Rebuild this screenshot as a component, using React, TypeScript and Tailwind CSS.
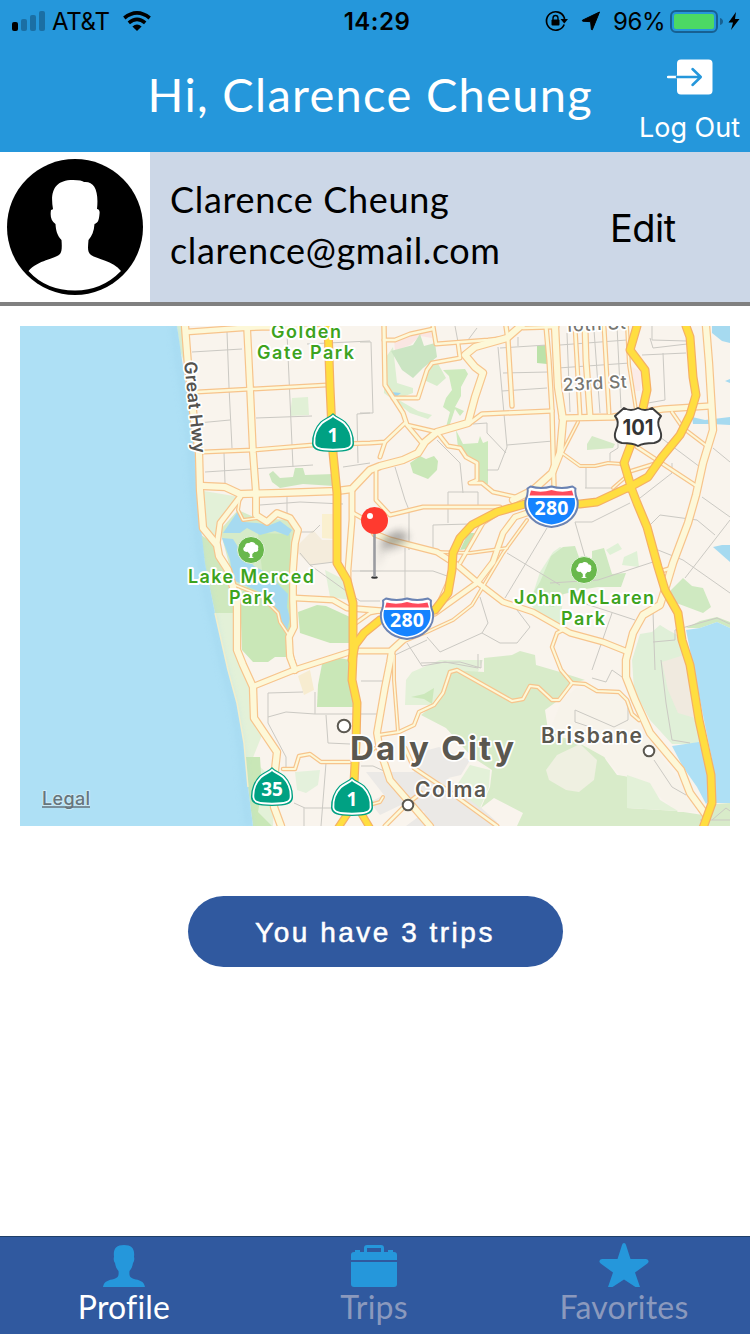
import React from "react";

type Road = { d: string; w: number };

const sans = "font-['Inter','Liberation_Sans',sans-serif]";
const avenir = "font-['Lato','Open_Sans',sans-serif]";

const areas: { fill: string; p: string }[] = [
  // coast
  { fill: "#dcefcf", p: "177,326 186,326 186,345 184,362 180,350" },
  { fill: "#e3f1d8", p: "198,490 240,497 218,527 216,540 203,528" },
  { fill: "#cfe8be", p: "201,535 216,545 233,575 237,613 215,613 205,565" },
  { fill: "#e3f1d8", p: "215,613 237,613 238,650 253,687 254,718 262,735 252,760 275,780 273,826 253,826 248,787 244,743 237,703 228,670" },
  { fill: "#c9e7b7", p: "245,757 260,757 262,790 258,812 272,826 253,826 248,787" },
  // Sunset and Stern Grove
  { fill: "#e1f0d6", p: "292,398 308,397 309,415 290,416" },
  { fill: "#cbe6bd", p: "269,474 273,471 280,478 293,477 295,468 303,468 305,475 334,474 334,486 303,484 280,488 272,482" },
  // Lake Merced
  { fill: "#d6ebc8", p: "220,530 238,510 256,518 290,520 296,533 292,600 240,600 232,575" },
  { fill: "#c9e7b7", p: "258,533 290,534 291,610 289,657 275,657 268,662 253,662 242,650 240,595 262,570" },
  { fill: "#a6daf0", p: "223,533 238,511 245,522 257,523 270,525 280,521 292,530 288,536 275,531 260,535 247,528 240,533" },
  { fill: "#a6daf0", p: "222,538 233,539 240,550 254,566 267,573 288,594 287,607 290,618 287,630 281,620 278,610 260,592 233,580 230,560" },
  { fill: "#f4ecdc", p: "298,545 313,530 322,540 333,540 334,562 310,565 298,553" },
  { fill: "#faf0cf", p: "322,514 334,514 334,539 322,538" },
  { fill: "#c9e7b7", p: "298,612 317,605 326,606 350,617 350,643 330,643 300,633" },
  { fill: "#e3f1d8", p: "325,570 345,580 350,600 330,597" },
  { fill: "#c9e7b7", p: "322,664 334,657 350,660 354,707 317,707 318,685" },
  { fill: "#f7ecd0", p: "298,676 310,670 314,690 304,695" },
  // Twin Peaks and Glen Canyon
  { fill: "#fae6e2", p: "394,340 410,333 431,328 432,338 420,336 410,345 395,351" },
  { fill: "#dcefd1", p: "384,360 393,347 397,383 413,388 413,393 397,399 418,411 432,415 428,419 410,413 400,405 384,393" },
  { fill: "#cbe5c3", p: "391,351 413,345 420,334 424,346 435,343 437,357 423,368 413,378 402,370" },
  { fill: "#d8edcc", p: "428,366 436,360 446,378 437,386 424,380" },
  { fill: "#cdeabd", p: "443,370 465,369 468,374 461,387 461,396 455,407 464,411 460,416 455,409 449,427 446,427 450,412 443,407 446,398 452,390 449,376" },
  { fill: "#cdeabd", p: "456,430 463,444 478,443 480,436 483,443 488,441 488,484 478,484 478,463 458,448" },
  { fill: "#c9e7b7", p: "410,463 420,456 426,459 434,456 438,461 437,470 428,479 413,473" },
  { fill: "#9ed6ef", p: "391,392 401,393 396,397" },
  { fill: "#bce2a9", p: "537,346 546,345 547,364 537,363" },
  { fill: "#d5eac7", p: "587,444 592,436 615,444 613,448 587,450" },
  { fill: "#fbebe7", p: "632,367 642,372 640,391 634,391" },
  { fill: "#c2e5b4", p: "460,550 468,533 475,533 466,549" },
  // McLaren Park
  { fill: "#e0f1d7", p: "540,572 553,552 560,547 568,550 560,627 536,612 530,603" },
  { fill: "#cfe9c1", p: "551,556 563,547 575,546 580,560 592,560 592,551 604,548 612,574 626,573 621,587 598,587 580,590 560,595 554,607 527,603 540,582" },
  { fill: "#dff1d6", p: "606,550 618,543 622,549 610,555" },
  { fill: "#dff1d6", p: "624,557 637,551 639,567 622,565" },
  { fill: "#cfe9c1", p: "671,590 683,578 692,586 703,588 711,607 703,613 687,607 671,601" },
  // bayshore
  { fill: "#e0f0d8", p: "640,634 652,632 660,625 668,630 681,637 699,720 700,744 672,744 650,720 634,690 632,660" },
  { fill: "#f0eadf", p: "662,662 684,655 695,718 678,713 668,690" },
  { fill: "#cfe9c1", p: "686,628 700,621 717,617 730,622 730,628 717,622 700,628" },
  // San Bruno Mountain
  { fill: "#e3f1d8", p: "406,680 412,672 440,660 470,660 483,660 470,690 445,705 425,705 405,705" },
  { fill: "#d8ebc9", p: "448,670 484,672 484,658 512,655 520,651 535,655 536,665 560,672 585,680 572,683 556,702 545,710 548,730 560,737 598,745 606,760 617,775 627,776 627,808 677,811 703,815 699,826 517,826 523,813 494,798 481,808 490,787 492,770 472,757 446,728 421,715 436,703 443,693" },
  { fill: "#cce8bb", p: "411,697 424,694 434,688 432,704 424,699" },
  { fill: "#eff0e1", p: "546,770 557,755 580,744 597,760 594,780 579,792 566,790 549,780" },
  { fill: "#f7f3ea", p: "562,700 577,688 625,695 638,722 658,752 686,790 697,812 678,812 640,780 620,775 606,758 570,738 550,730" },
  { fill: "#e3f1d8", p: "627,775 650,783 660,800 678,811 627,808" },
  { fill: "#d8ebc9", p: "706,816 716,804 730,803 730,826 704,826" },
  // Daly City and Colma
  { fill: "#e4f1dc", p: "295,772 320,770 318,785 306,793 297,790" },
  { fill: "#ebe9e6", p: "366,772 414,772 421,752 439,747 470,760 461,775 448,778 497,822 495,826 406,826 425,812 405,803 380,815 370,802 384,795" },
  { fill: "#e3f1d8", p: "463,776 470,765 490,770 489,787 480,808 455,788" },
  // water
  { fill: "#aee0f5", p: "686,630 700,628 717,622 730,628 730,803 716,803 712,760 702,710" },
  { fill: "#aee0f5", p: "672,746 699,742 712,780 712,798 706,804 697,787 683,767" },
  { fill: "#a6daf0", p: "712,326 730,326 730,343 722,341 712,333" },
  { fill: "#a6daf0", p: "692,417 705,420 730,417 730,425 712,424 693,424" },
  { fill: "#a6daf0", p: "713,547 722,545 730,545 730,562" },
  { fill: "#a6daf0", p: "725,381 730,379 730,383" },
];

const lanes: string[] = [
  "M227 332L229 387L232 448", "M287 333L290 400L293 467", "M192 352L242 349", "M307 344L370 341", "M198 423L230 420",
  "M256 418L312 416", "M205 472L313 465", "M224 453L225 483", "M370 413L357 414L358 463", "M343 467L370 463",
  "M360 342H371L373 413H360", "M455 326L458 342", "M477 328L468 340", "M498 347L507 447L498 470H487", "M507 445L553 441",
  "M503 373L548 372", "M502 391L547 388", "M500 348L547 345", "M518 337V346", "M473 424L487 423V433L506 453",
  "M437 440L460 463L463 493", "M448 523V492H478V507", "M433 552V525L470 524", "M395 467L405 500L409 510V550",
  "M405 548V610", "M360 571H433L450 577", "M360 601H380", "M547 528L505 598", "M507 553L560 585",
  "M480 597L488 623L482 633L500 643H517L530 627L517 610", "M482 633L440 652L427 637", "M395 655L427 640",
  "M407 643L422 666L445 662L478 668V654", "M660 437L700 467", "M713 448L730 462", "M585 488H618", "M586 467V488",
  "M618 428V448L610 453V463", "M650 338L653 348L687 344", "M642 355L686 353", "M663 353L665 400L648 403", "M652 326V340L687 341",
  "M567 333L570 412", "M594 330L600 413", "M617 326L621 408", "M560 345L627 340", "M558 368L630 363", "M640 498L672 473V463",
  "M650 525L660 515L697 520L715 535", "M702 497L730 517", "M730 520L685 578", "M658 550L683 560L730 593",
  "M575 522L585 557", "M575 522H592L630 503", "M598 580L653 562", "M550 583L598 580", "M583 603L635 620", "M612 613L592 670",
  "M653 612L655 670", "M653 642L675 640V630L717 618L730 624", "M260 505L300 502L343 504", "M287 497V514", "M300 532H313L320 525", "M300 553L310 565L334 562",
  "M310 565L360 601", "M352 571H375", "M303 692L268 693V723L286 757V768", "M268 717L286 712L315 714H377", "M315 692V714",
  "M326 715L328 743L350 744", "M326 763L321 826", "M294 803L305 808H334", "M304 808V826", "M361 681H385",
  "M575 710L614 727L628 720V702", "M661 660L666 703L672 740L690 743", "M654 760L672 787L686 795", "M421 663L460 662L481 668V660",
  "M592 678L606 682L612 670L622 677", "M712 820L726 808L730 811", "M361 766H373L384 771", "M575 710V722L590 727", "M700 820H730",
];

const roads: Road[] = [
  { d: "M187 332L242 328L270 327L330 330", w: 6 },
  { d: "M197 392L327 385", w: 4 },
  { d: "M203 452L253 450L313 445L370 443L385 442L405 423", w: 4 },
  { d: "M352 489L352 520L350 545L348 570L348 583", w: 6 },
  { d: "M384 326L385 385L403 413L407 425L422 443", w: 4.5 },
  { d: "M384 340H395L410 334L433 329", w: 4 },
  { d: "M433 326L436 344L488 340L507 338", w: 4 },
  { d: "M458 343L460 358L432 363L427 370L418 398H393", w: 4 },
  { d: "M506 326L508 340L512 406", w: 4.5 },
  { d: "M523 328L557 327", w: 4 },
  { d: "M470 423L482 414L552 411", w: 4.5 },
  { d: "M407 425L437 432L448 446L460 448L466 457L477 463V480L470 483H482L493 492L520 498", w: 4 },
  { d: "M385 442L380 457", w: 4 },
  { d: "M376 470V500L390 515L423 507H500", w: 4 },
  { d: "M353 513L362 518L375 535", w: 4 },
  { d: "M437 552L470 553L507 548", w: 3 },
  { d: "M460 563L483 523L500 512", w: 4 },
  { d: "M527 520L503 553L472 605L453 620L427 632L400 643", w: 3 },
  { d: "M435 610L453 570", w: 3 },
  { d: "M435 613L477 583L493 562L503 533L515 517L530 512", w: 6 },
  { d: "M375 534L390 540L437 552L457 565L477 582L503 602L533 612L570 633L603 642L628 652", w: 6 },
  { d: "M295 598L333 600L347 608L385 611", w: 6 },
  { d: "M353 625L370 613L380 611", w: 4 },
  { d: "M353 651H392", w: 6 },
  { d: "M403 640L392 650L390 662L385 687L377 733L380 750L390 780L410 803L430 826", w: 7 },
  { d: "M394 655V680L398 732", w: 3 },
  { d: "M254 686L294 670L350 652", w: 6 },
  { d: "M240 497L220 523L217 545", w: 6 },
  { d: "M240 497L238 510L243 520L258 518", w: 3 },
  { d: "M235 585L260 595L278 613L280 622L288 634", w: 3 },
  { d: "M379 735L399 732L414 725L419 712L434 705L443 693L450 672L457 670L512 701L523 699L530 686L538 687L552 700H559L572 683L561 670L552 647L557 633L563 630", w: 3.5 },
  { d: "M572 683L585 684L597 691L619 692L627 700L632 714L639 720", w: 3.5 },
  { d: "M283 769H295L299 756L310 754L321 762H350", w: 3.5 },
  { d: "M405 748L414 768L450 792L497 826", w: 4 },
  { d: "M385 826L408 803L421 793", w: 4 },
  { d: "M361 760L375 748", w: 3 }, { d: "M366 806L380 802L383 797", w: 3 },
  { d: "M575 326L580 415", w: 4 },
  { d: "M585 326L586 360L590 415", w: 6 },
  { d: "M604 326L609 413", w: 4 },
  { d: "M627 326L629 365L636 410", w: 3 },
  { d: "M578 422L562 453L580 466H595L608 463L622 464", w: 3 },
  { d: "M637 447L695 485", w: 4 },
  { d: "M672 412L683 428L708 447", w: 3.5 },
  { d: "M628 472L657 463", w: 3.5 },
  { d: "M613 488L628 475", w: 3 },
  { d: "M546 326L549 360L552 411L554 487", w: 4.5 },
  { d: "M562 418L613 417L663 409L710 406", w: 6.5 },
  { d: "M555 326L558 387L563 420L560 453L552 473L533 490L513 500", w: 7.5 },
  { d: "M706 326L709 363L713 430L703 463L696 495L688 523L673 563L667 583L660 605L643 615L633 633L626 660V677L635 700L650 733L681 770L690 793L706 815", w: 7.5 },
  { d: "M658 572L672 568", w: 4 },
  { d: "M185 326L188 365L194 420L199 453L200 490L203 528L217 545L219 556L228 570L233 587L237 600V650L243 665L253 687L254 718L277 752L275 770L274 807L281 826", w: 7.5 },
  { d: "M203 486L225 487L240 494L280 493L337 491L352 489L370 470L380 466L403 460L418 453L425 442L437 432L468 423L475 397L483 373L475 367L465 355L475 347L507 338L523 324", w: 7.5 },
  { d: "M247 326L250 387L253 453L256 493V515L267 522L277 513L290 518L298 530L295 543L293 570V600L294 627L289 637L290 657L295 670", w: 7 },
  { d: "M291 655L295 671", w: 5 },
];

const highways: Road[] = [
  { d: "M328 326L330 387L333 453L337 493V563L347 580L353 603V657L352 680L357 703L356 743L354 783", w: 8 },
  { d: "M354 783L348 813L338 828M354 783L361 813L370 828", w: 7 },
  { d: "M352 660L355 645L364 633L380 620L405 615L435 610L448 593L452 570L453 553L460 538L472 525L497 512L525 504L580 504L597 502L627 488", w: 8 },
  { d: "M637 326L630 350L645 370L647 390L643 408L630 447L624 463L632 490L637 503L647 527L658 567L665 590L678 613L682 640L690 665L699 720L711 775L712 803L703 828", w: 8 },
  { d: "M686 326L690 337L693 377L696 395L690 415L680 435L662 457L648 477L628 488", w: 8 },
];

function Map() {
  return (
    <svg viewBox="20 326 710 500" className={`block h-[500px] w-[710px] ${sans}`}>
      <defs>
        <filter id="soft" x="-50%" y="-50%" width="200%" height="200%">
          <feGaussianBlur stdDeviation="4" />
        </filter>
        <filter id="shore" x="-10%" y="-10%" width="120%" height="120%">
          <feGaussianBlur stdDeviation="3" />
        </filter>
      </defs>
      <rect x="20" y="326" width="710" height="500" fill="#f9f4ed" />
      {areas.map((a, i) => (
        <polygon key={i} points={a.p} fill={a.fill} strokeLinejoin="round" />
      ))}
      <path
        d="M20 326H177L182 360L190 410L195 455L197 490L202 537L205 563L215 613L228 670L237 703L244 743L248 787L253 826H20Z"
        fill="#aee0f5"
      />
      <path
        d="M174 326L178 360L186 410L191 455L193 490L198 537L201 563L211 613L224 670L233 703L240 743L244 787L249 826"
        fill="none" stroke="#9fd4ec" strokeWidth="5" opacity="0.5" filter="url(#shore)"
      />
      <path d="M215 613L228 670L237 703L244 743L248 787" fill="none" stroke="#f3eecb" strokeWidth="1.5" />
      <g fill="none" stroke="#cbc9c3" strokeWidth="1">
        {lanes.map((d, i) => <path key={i} d={d} />)}
      </g>
      <g fill="none" strokeLinejoin="round" strokeLinecap="round">
        {roads.map((r, i) => <path key={i} d={r.d} stroke="#f7c48c" strokeWidth={r.w + 1} />)}
        {roads.map((r, i) => <path key={i} d={r.d} stroke="#fdf8d8" strokeWidth={r.w - 1.4} />)}
        {highways.map((r, i) => <path key={i} d={r.d} stroke="#f5b065" strokeWidth={r.w + 1} />)}
        {highways.map((r, i) => <path key={i} d={r.d} stroke="#ffde40" strokeWidth={r.w - 1.4} />)}
      </g>

      <g fill="#3da31d" stroke="#fff" strokeWidth="4" strokeLinejoin="round" fontSize="18" fontWeight="600" style={{ paintOrder: "stroke" }}>
        <text x="271" y="338" textLength="70">Golden</text>
        <text x="257" y="359" textLength="97">Gate Park</text>
        <text x="188" y="583" textLength="126">Lake Merced</text>
        <text x="229" y="604" textLength="44">Park</text>
        <text x="514" y="604" textLength="140">John McLaren</text>
        <text x="561" y="625" textLength="44">Park</text>
      </g>
      <g stroke="#fff" strokeWidth="3.5" strokeLinejoin="round" style={{ paintOrder: "stroke" }}>
        <text x="563" y="391" fontSize="17.5" fontWeight="500" fill="#777772" textLength="64" transform="rotate(-3 563 391)">23rd St</text>
        <text x="565" y="332" fontSize="17.5" fontWeight="500" fill="#777772" textLength="61" transform="rotate(-3 565 332)">16th St</text>
        <text x="184" y="362" fontSize="17.5" fontWeight="600" fill="#55534f" textLength="92" transform="rotate(84 184 362)">Great Hwy</text>
        <text x="350" y="760" fontSize="33" fontWeight="700" fill="#5b5850" textLength="164">Daly City</text>
        <text x="541" y="742.500" fontSize="21" fontWeight="600" fill="#5b5850" textLength="101">Brisbane</text>
        <text x="415" y="796.500" fontSize="21" fontWeight="600" fill="#5b5850" textLength="71">Colma</text>
      </g>
      <g fill="#fff" stroke="#5b5850" strokeWidth="2">
        <circle cx="344" cy="726" r="6.3" />
        <circle cx="408" cy="805" r="5.3" />
        <circle cx="649" cy="751" r="5.3" />
      </g>
      <Tree x={251} y={550} />
      <Tree x={584} y={570} />
      <StateShield x={333} y={433} label="1" />
      <StateShield x={272} y={787} label="35" />
      <StateShield x={352} y={797} label="1" />
      <Interstate x={551.5} y={506.5} />
      <Interstate x={407} y={618.5} />
      <g transform="translate(638 427)">
        <path
          d="M-14 -19Q-7 -15 0 -19Q7 -15 14 -19L23 -11Q18 -5 22 3Q26 14 16 16Q5 16 0 19Q-5 16 -16 16Q-26 14 -22 3Q-18 -5 -23 -11Z"
          fill="#fff" stroke="#3d3d3d" strokeWidth="2" strokeLinejoin="round"
        />
        <text y="8" textAnchor="middle" fontSize="21" fontWeight="700" fill="#333" textLength="31" lengthAdjust="spacingAndGlyphs">101</text>
      </g>

      <path d="M376 570L386 545L408 536L398 530L382 540Z" fill="#555" opacity="0.3" filter="url(#soft)" />
      <ellipse cx="395" cy="541" rx="14" ry="7" fill="#555" opacity="0.35" filter="url(#soft)" transform="rotate(-25 395 541)" />
      <ellipse cx="374.5" cy="577.5" rx="3.3" ry="1.2" fill="#333" />
      <path d="M374.5 532V577" stroke="#9a9ba0" strokeWidth="2.6" />
      <circle cx="374.5" cy="520.5" r="13.5" fill="#ff3a2f" />
      <circle cx="370" cy="516" r="3" fill="#fff" />

      <g fill="none" strokeLinejoin="round">
        <text x="42" y="805" fontSize="18" fontWeight="500" fill="#66757c" stroke="#cdeaf6" strokeWidth="2" textLength="48" style={{ paintOrder: "stroke" }}>Legal</text>
        <path d="M42 807H90" stroke="#66757c" strokeWidth="1.5" />
      </g>
    </svg>
  );
}

function Tree({ x, y }: { x: number; y: number }) {
  return (
    <g transform={`translate(${x} ${y})`}>
      <circle r="13.5" fill="#69b84c" stroke="#e6f4de" strokeWidth="1" />
      <path
        fill="#fff"
        d="M-1.200 7V4L-3.500 1.800C-8 2.600 -9 -2 -6 -3.500C-6 -6.500 -3.500 -7.500 -2 -6.800C0 -9 4 -8 4.500 -5.500C7 -5.500 8 -3 7 -1.800C8 0.500 6 2.600 3.700 1.800L1.300 4V7L3 8H-3Z"
      />
    </g>
  );
}

function StateShield({ x, y, label }: { x: number; y: number; label: string }) {
  const d = "M0 -18.5C3 -15.5 8 -14 12 -10.5C17 -5.5 20.5 3 20 11C19.5 16 15 18 0 18C-15 18 -19.5 16 -20 11C-20.5 3 -17 -5.5 -12 -10.5C-8 -14 -3 -15.5 0 -18.5Z";
  return (
    <g transform={`translate(${x} ${y})`}>
      <path d={d} fill="#00a183" stroke="#00a183" strokeWidth="2" />
      <path d={d} fill="#00a183" stroke="#fff" strokeWidth="2" transform="scale(.93)" />
      <text y="9" textAnchor="middle" fontSize="19" fontWeight="700" fill="#fff" className="font-['Noto_Sans','Open_Sans',sans-serif]">{label}</text>
    </g>
  );
}

function Interstate({ x, y }: { x: number; y: number }) {
  return (
    <g transform={`translate(${x} ${y})`}>
      <path
        d="M-21 -20Q-10 -17 0 -20Q10 -17 21 -20L24 -18Q23 -13 26 -6C28 8 16 19 0 20.5C-16 19 -28 8 -26 -6Q-23 -13 -24 -18Z"
        fill="#fff" stroke="#6b83b3" strokeWidth="2" strokeLinejoin="round"
      />
      <path d="M-20.500 -16Q-10 -13.500 0 -16.500Q10 -13.500 20.500 -16L22 -11H-22Z" fill="#ff4b5c" />
      <path d="M-23 -8.500H23C26 6 15 16.500 0 18C-15 16.500 -26 6 -23 -8.500Z" fill="#1583ff" />
      <text y="8.500" textAnchor="middle" fontSize="19.500" fontWeight="700" fill="#fff" textLength="34" className="font-['Noto_Sans','Open_Sans',sans-serif]">280</text>
    </g>
  );
}

function StatusBar() {
  return (
    <div className={`grid h-10 grid-cols-3 items-center pl-3 pr-2 text-black ${sans}`}>
      <div className="flex items-center">
        <svg viewBox="0 0 34 20" className="h-5 w-[34px]">
          <rect x="0" y="11" width="6" height="9" rx="2" />
          <g fill="#1b6fa4">
            <rect x="9" y="8" width="6" height="12" rx="2" />
            <rect x="18" y="4" width="6" height="16" rx="2" />
            <rect x="27" y="0" width="6" height="20" rx="2" />
          </g>
        </svg>
        <span className="ml-1.5 w-[59px] pt-0.5 text-[24px] leading-10 tracking-[-0.3px]">AT&amp;T</span>
        <svg viewBox="0 0 28 20" className="ml-3 h-5 w-7">
          <g fill="none" stroke="#000" strokeWidth="3.6">
            <path d="M1.300 7Q14 -3.200 26.700 7" />
            <path d="M5.800 11.800Q14 4.800 22.200 11.800" />
          </g>
          <path d="M9.400 15.400Q14 11.800 18.600 15.400L14 20Z" />
        </svg>
      </div>
      <span className="pt-0.5 text-center text-[24px] font-semibold leading-10 tracking-[0.5px]">14:29</span>
      <div className="flex items-center justify-end pr-0.5">
        <svg viewBox="0 0 23 22" className="mr-px h-[22px] w-[23px]">
          <path d="M19.200 14.500A9.200 9.200 0 1 1 19.200 7.500L19.500 9" fill="none" stroke="#000" strokeWidth="1.700" />
          <path d="M15.500 9H23L19.300 13.600Z" />
          <rect x="6.500" y="9.500" width="8" height="6" rx="1" />
          <path d="M8 10V8.200Q8 5.500 10.500 5.500Q13 5.500 13 8.200V10" fill="none" stroke="#000" strokeWidth="1.400" />
        </svg>
        <svg viewBox="0 0 20 20" className="ml-3 h-5 w-5">
          <path d="M18.500 1L1.300 9.300L1.700 10.200L9.600 10.700L10.400 18.500L11.300 18.800Z" stroke="#000" strokeLinejoin="round" />
        </svg>
        <span className="ml-3 w-[50px] whitespace-nowrap pt-0.5 text-[24px] leading-10 tracking-[-0.4px]">96%</span>
        <svg viewBox="0 0 54 23" className="ml-[7px] mt-px h-[23px] w-[54px]">
          <rect x="1" y="1" width="46" height="21" rx="5" fill="none" stroke="#176092" strokeWidth="2" />
          <rect x="4" y="4" width="40" height="15" rx="2" fill="#4cd964" />
          <path d="M50 8Q53 9 53 11.500Q53 14 50 15Z" fill="#176092" />
        </svg>
        <svg viewBox="0 0 12 20" className="ml-1 h-5 w-3">
          <path d="M8 1L0.500 11.500H5L3 19L11.500 8H7Z" />
        </svg>
      </div>
    </div>
  );
}

function Header() {
  return (
    <header className="h-[152px] bg-[#2597db]">
      <StatusBar />
      <div className="flex h-28 justify-end text-white">
        <h1 className={`mr-[46px] mt-[19px] whitespace-nowrap text-[47px] leading-[70px] tracking-[1.3px] ${avenir}`}>Hi, Clarence Cheung</h1>
        <button className={`mr-[9px] flex w-[102px] shrink-0 flex-col items-start pt-[19px] text-[27px] ${sans}`}>
          <svg viewBox="0 0 46 36" className="ml-[28px] h-9 w-[46px]" fill="none" strokeWidth="2.500" strokeLinecap="round">
            <rect x="10" y="0.500" width="35.500" height="35" rx="4" fill="#fff" />
            <path d="M1 18H10" stroke="#fff" />
            <path d="M10 18H33.500M25.500 10L33.800 18L25.500 26" stroke="#2597db" strokeLinejoin="round" />
          </svg>
          <span className="mt-[13px] whitespace-nowrap leading-10">Log Out</span>
        </button>
      </div>
    </header>
  );
}

function ProfileCard() {
  return (
    <section className="flex h-[154px] border-b-4 border-[#808080] bg-[#ccd7e7] text-black">
      <div className="h-[150px] w-[150px] shrink-0 bg-white">
        <svg viewBox="0 0 150 150" className="h-[150px] w-[150px]">
          <circle cx="75" cy="75" r="68" />
          <path
            d="M28.500 119C38 108 55 107 60 102C62 100 62 94 61.500 88C57 83 56 79 55.500 72C51 69 50 64 51 58C52 58 53 57 53 57C50 40 54 28 73 28Q82 28 84 30C94 29 99 38 97 57C99 57 100 59 99.500 62C99 68 98 71 94.500 72C94 79 92 84 88.500 88C88 95 87 100 91 103C97 107 113 109 121 119Q102 138.500 75 138.500Q46 138.500 28.500 119Z"
            fill="#fff"
          />
        </svg>
      </div>
      <div className={`w-[460px] whitespace-nowrap pl-5 pt-[22px] text-[36px] leading-[51px] ${avenir}`}>
        <p className="tracking-[0.7px]">Clarence Cheung</p>
        <p className="tracking-[0.6px]">clarence@gmail.com</p>
      </div>
      <button className={`h-[150px] pt-0.5 text-[38px] tracking-[-0.5px] ${sans}`}>Edit</button>
    </section>
  );
}

function Tab({ label, active, children }: { label: string; active?: boolean; children: React.ReactNode }) {
  return (
    <button className={`flex flex-1 flex-col items-center pr-0.5 pt-1.5 ${avenir} ${active ? "text-white" : "text-[#8b99bd]"}`}>
      <svg viewBox="0 0 50 46" className="h-[46px] w-[50px]" fill="#2597db">{children}</svg>
      <span className="-mt-px text-[32px] leading-[38px] tracking-[0.2px]">{label}</span>
    </button>
  );
}

export default function App() {
  return (
    <div className="flex h-[1334px] w-[750px] flex-col overflow-hidden bg-white">
      <Header />
      <ProfileCard />
      <main className="flex flex-1 flex-col items-center pt-5">
        <Map />
        <button className="mt-[70px] h-[71px] w-[375px] rounded-full bg-[#30599f] pt-0.5 font-['Liberation_Sans',sans-serif] text-[28px] tracking-[2.5px] text-white [-webkit-text-stroke:0.5px_white]">
          You have 3 trips
        </button>
      </main>
      <nav className="flex h-[98px] border-t border-[#1f3f68] bg-[#30599f]">
        <Tab label="Profile" active>
          <path d="M4 44C5 38 10 37 15 36C19 35 20 33 19.500 28C17.500 26 16.500 23 16 20C14.500 18 14.500 15 15 14C14 6 17 2 25 2C33 2 36 6 35 14C35.500 15 35.500 18 34 20C33.500 23 32.500 26 30.500 28C30 33 31 35 35 36C40 37 45 38 46 44Z" />
        </Tab>
        <Tab label="Trips">
          <path d="M2 17V12Q2 9 5 9H6V7H11V9H15V5Q15 2 18 2H32Q35 2 35 5V9H39V7H44V9H45Q48 9 48 12V17ZM18 5V9H32V5Z" fillRule="evenodd" />
          <path d="M2 19H48V41Q48 44 45 44H5Q2 44 2 41Z" />
        </Tab>
        <Tab label="Favorites">
          <path d="M25 0Q26.500 0 27 2L31.500 16H47Q50 16.500 49.500 19Q49 20 47 21.500L36 29.500L41 44H36.500L25 36.500L13.500 44H9L14 29.500L3 21.500Q1 20 0.500 19Q0 16.500 3 16H18.500L23 2Q23.500 0 25 0Z" />
        </Tab>
      </nav>
    </div>
  );
}
